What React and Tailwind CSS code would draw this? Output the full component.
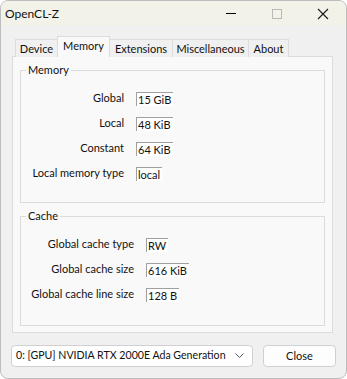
import React from 'react';

const memoryRows = [
  { label: 'Global', value: '15 GiB' },
  { label: 'Local', value: '48 KiB' },
  { label: 'Constant', value: '64 KiB' },
  { label: 'Local memory type', value: 'local' },
];

const cacheRows = [
  { label: 'Global cache type', value: 'RW' },
  { label: 'Global cache size', value: '616 KiB' },
  { label: 'Global cache line size', value: '128 B' },
];

const tabs = [
  { name: 'Device', w: 'w-[43px]' },
  { name: 'Memory', w: 'w-[53px]' },
  { name: 'Extensions', w: 'w-[64px]' },
  { name: 'Miscellaneous', w: 'w-[77px]' },
  { name: 'About', w: 'w-[41px]' },
];

function ValueBox({ children }) {
  return (
    <span className="inline-block h-[14px] leading-[13px] bg-white border-t border-l border-[#a0a0a0] pl-[1px] pr-[2px] whitespace-nowrap">
      {children}
    </span>
  );
}

function Row({ label, value, labelWidth }) {
  return (
    <div className="flex items-center h-[25px]">
      <div className={`${labelWidth} text-right pr-[12px] whitespace-nowrap shrink-0`}>{label}</div>
      <ValueBox>{value}</ValueBox>
    </div>
  );
}

function GroupBox({ title, height, children }) {
  return (
    <div className={`relative border border-[#dcdcdc] ${height}`}>
      <span className="absolute -top-[8px] left-[5px] bg-[#f9f9f9] px-[2px] leading-[14px]">{title}</span>
      <div className="pt-[15px]">{children}</div>
    </div>
  );
}

export default function App() {
  return (
    <div
      className="w-[347px] h-[379px] bg-[#f0f0f0] rounded-[8px] border border-[#bdbdbd] overflow-hidden flex flex-col text-[11px] text-[#111]"
      style={{ fontFamily: 'Lato, "Liberation Sans", sans-serif' }}
    >
      {/* title bar */}
      <div className="h-[25px] bg-[#f3f2e9] flex items-center shrink-0">
        <span className="pl-[4px] text-[12px] flex-1">OpenCL-Z</span>
        <div className="flex items-center">
          <div className="w-[46px] h-[25px] flex items-center justify-center">
            <div className="w-[10px] h-px bg-black" />
          </div>
          <div className="w-[46px] h-[25px] flex items-center justify-center">
            <div className="w-[10px] h-[10px] border border-[#b8b8b8]" />
          </div>
          <div className="w-[46px] h-[25px] flex items-center justify-center">
            <svg width="12" height="12" viewBox="0 0 12 12">
              <path d="M1 1 L11 11 M11 1 L1 11" stroke="#1a1a1a" strokeWidth="1.1" />
            </svg>
          </div>
        </div>
      </div>

      {/* tabs */}
      <div className="pl-[11px] pr-[13px] pt-[10px] flex flex-col">
        <div className="flex items-end h-[21px] pl-[3px] relative z-10">
          {tabs.map((t) =>
            t.name === 'Memory' ? (
              <div
                key={t.name}
                className={`${t.w} h-[21px] text-center bg-[#f9f9f9] border border-b-0 border-[#dcdcdc] leading-[17px] -ml-px shrink-0`}
              >
                {t.name}
              </div>
            ) : (
              <div
                key={t.name}
                className={`${t.w} h-[18px] text-center bg-[#f0f0f0] border border-b-0 border-[#dcdcdc] leading-[18px] -ml-px first:ml-0 shrink-0`}
              >
                {t.name}
              </div>
            )
          )}
        </div>
        <div className="h-[277px] -mt-px bg-[#f9f9f9] border border-[#dcdcdc] px-[7px] pt-[13px] flex flex-col gap-[13px]">
          <GroupBox title="Memory" height="h-[133px]">
            {memoryRows.map((r) => (
              <Row key={r.label} label={r.label} value={r.value} labelWidth="w-[115px]" />
            ))}
          </GroupBox>
          <GroupBox title="Cache" height="h-[110px]">
            {cacheRows.map((r) => (
              <Row key={r.label} label={r.label} value={r.value} labelWidth="w-[125px]" />
            ))}
          </GroupBox>
        </div>
      </div>

      {/* bottom */}
      <div className="flex items-center pl-[10px] pr-[10px] mt-[12px]">
        <div className="w-[242px] h-[22px] bg-white border border-[#d0d0d0] rounded-[4px] flex items-center pl-[4px] pr-[8px]">
          <span className="flex-1 whitespace-nowrap overflow-hidden text-[10.6px]">0: [GPU] NVIDIA RTX 2000E Ada Generation</span>
          <svg width="9" height="6" viewBox="0 0 9 6" className="shrink-0 ml-[4px]">
            <path d="M0.5 0.5 L4.5 4.5 L8.5 0.5" stroke="#555" fill="none" strokeWidth="1" />
          </svg>
        </div>
        <div className="ml-auto w-[73px] h-[22px] bg-[#fdfdfd] border border-[#d0d0d0] rounded-[4px] flex items-center justify-center">
          Close
        </div>
      </div>
    </div>
  );
}
